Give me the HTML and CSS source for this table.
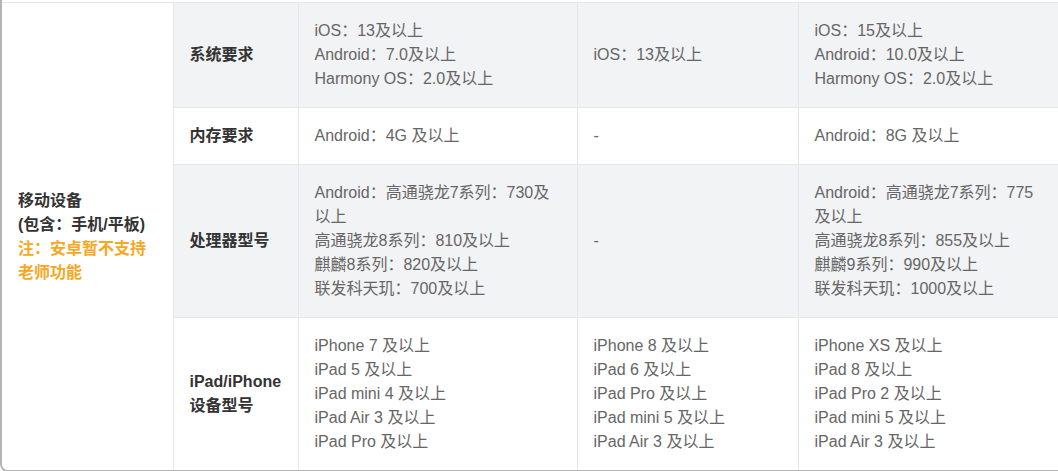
FILE: index.html
```html
<!DOCTYPE html>
<html lang="zh-CN">
<head>
<meta charset="utf-8">
<title>设备要求</title>
<link rel="stylesheet" href="styles.css">
</head>
<body>
<div class="card">
  <table class="spec">
    <colgroup>
      <col class="c1"><col class="c2"><col class="c3"><col class="c4"><col class="c5">
    </colgroup>
    <tbody>
      <tr class="shade">
        <td class="group" rowspan="4">移动设备<br>(包含：手机/平板)<br><span class="note">注：安卓暂不支持老师功能</span></td>
        <th>系统要求</th>
        <td>iOS：13及以上<br>Android：7.0及以上<br>Harmony OS：2.0及以上</td>
        <td>iOS：13及以上</td>
        <td>iOS：15及以上<br>Android：10.0及以上<br>Harmony OS：2.0及以上</td>
      </tr>
      <tr>
        <th>内存要求</th>
        <td>Android：4G 及以上</td>
        <td>-</td>
        <td>Android：8G 及以上</td>
      </tr>
      <tr class="shade">
        <th>处理器型号</th>
        <td>Android：高通骁龙7系列：730及以上<br>高通骁龙8系列：810及以上<br>麒麟8系列：820及以上<br>联发科天玑：700及以上</td>
        <td>-</td>
        <td>Android：高通骁龙7系列：775及以上<br>高通骁龙8系列：855及以上<br>麒麟9系列：990及以上<br>联发科天玑：1000及以上</td>
      </tr>
      <tr>
        <th>iPad/iPhone<br>设备型号</th>
        <td>iPhone 7 及以上<br>iPad 5 及以上<br>iPad mini 4 及以上<br>iPad Air 3 及以上<br>iPad Pro 及以上</td>
        <td>iPhone 8 及以上<br>iPad 6 及以上<br>iPad Pro 及以上<br>iPad mini 5 及以上<br>iPad Air 3 及以上</td>
        <td>iPhone XS 及以上<br>iPad 8 及以上<br>iPad Pro 2 及以上<br>iPad mini 5 及以上<br>iPad Air 3 及以上</td>
      </tr>
    </tbody>
  </table>
</div>
<h2 class="next-title">电脑设备硬件配置要求说明</h2>
</body>
</html>
```
FILE: styles.css
```css
html, body {
  margin: 0;
  padding: 0;
  background: #fff;
  overflow: hidden;
}
body {
  width: 1058px;
  height: 471px;
  font-family: "Liberation Sans", "Noto Sans CJK SC", sans-serif;
}
.card {
  width: 1080px;
  height: 468px;
  padding-top: 2px;
  border-left: 2px solid #b4b4b4;
  border-bottom: 2px solid #b4b4b4;
  border-bottom-left-radius: 8px;
  overflow: hidden;
  box-sizing: content-box;
  background: #fff;
}
.spec {
  border-collapse: collapse;
  table-layout: fixed;
  width: 1078px;
  font-size: 16px;
  line-height: 24px;
  color: #666;
}
.c1 { width: 171px; }
.c2 { width: 125px; }
.c3 { width: 279px; }
.c4 { width: 221px; }
.c5 { width: 282px; }
.spec td, .spec th {
  border: 1px solid #e6e7eb;
  padding: 16px 16px;
  vertical-align: middle;
  text-align: left;
}
.spec td:last-child, .spec th:last-child {
  padding-right: 38px;
}
.spec th {
  font-weight: bold;
  color: #333;
}
.spec tr.shade th, .spec tr.shade td {
  background: #f2f3f5;
}
.spec tr.shade td.group {
  background: #fff;
}
.spec td.group {
  font-weight: bold;
  color: #333;
  border-left: none;
}
.note {
  color: #f7a722;
}
.next-title {
  margin: -4px 0 0 312px;
  font-size: 28px;
  line-height: 32px;
  font-weight: bold;
  color: #111;
  font-family: "Noto Sans CJK SC", sans-serif;
}
```
